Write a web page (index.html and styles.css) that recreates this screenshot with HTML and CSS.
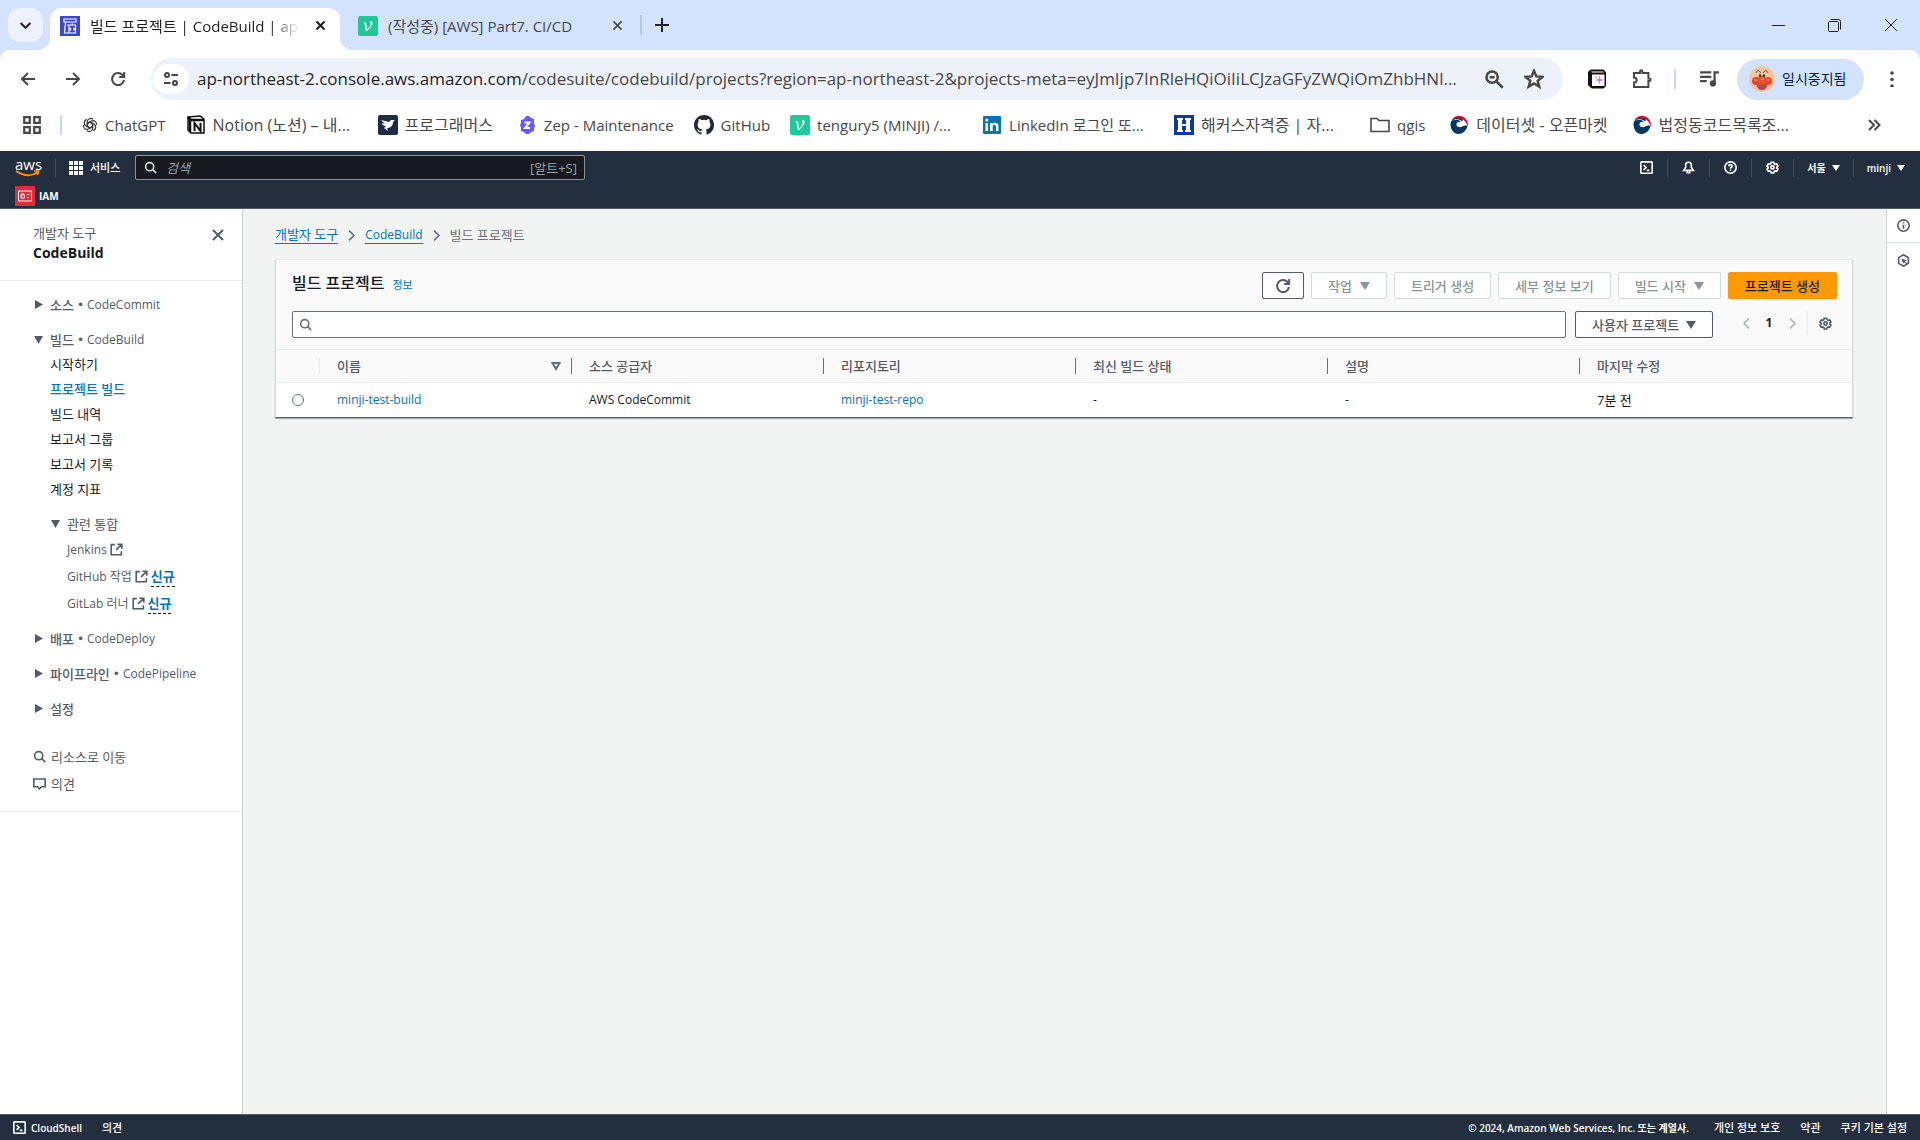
FILE: index.html
```html
<!DOCTYPE html>
<html lang="ko">
<head>
    <meta charset="UTF-8">
    <meta name="viewport" content="width=device-width, initial-scale=1.0">
    <title>빌드 프로젝트 | CodeBuild | ap-northeast-2</title>
    <link rel="stylesheet" href="styles.css">
</head>
<body>
    <!-- Shared icons -->
    <svg class="sprite" aria-hidden="true">
        <symbol id="i-close" viewBox="0 0 16 16"><path d="M3 3l10 10M13 3L3 13"/></symbol>
        <symbol id="i-search" viewBox="0 0 16 16"><circle cx="7" cy="7" r="5"/><path d="M10.700 10.700L15 15"/></symbol>
        <symbol id="i-gear" viewBox="0 0 16 16"><path d="M6.500 1.500h3l.6 1.900 1.200.7 1.900-.5 1.500 2.600-1.300 1.400v1.100l1.300 1.400-1.500 2.600-1.900-.5-1.200.7-.6 1.900h-3l-.6-1.900-1.200-.7-1.900.5-1.500-2.600 1.300-1.400V7.600L1.300 6.200l1.500-2.600 1.900.5 1.200-.7z"/><circle cx="8" cy="8" r="2"/></symbol>
        <symbol id="i-shell" viewBox="0 0 16 16"><rect x="1" y="1" width="14" height="14" rx="1"/><path d="M4.500 5l3 3-3 3M8.500 11.500h3"/></symbol>
        <symbol id="i-external" viewBox="0 0 16 16"><path d="M6 2H1.500v12.500H14V10M9 1.500h5.500V7M14 2L7.500 8.500"/></symbol>
        <symbol id="i-chevron" viewBox="0 0 16 16"><path d="M5 2l6 6-6 6"/></symbol>
        <symbol id="i-velog" viewBox="0 0 20 20"><rect width="20" height="20" rx="2" fill="#20c997" stroke="none"/><path d="M5.500 6.500L8 6l1.300 7.500c2-2 3.400-4 3.400-5.500 0-.8-.7-1-.7-1.600 0-.7.6-1.100 1.300-1.100.8 0 1.300.6 1.300 1.500 0 2.500-2.800 5.800-5.600 8.200H7.800L6.400 7.200l-1 .1z" fill="#fff" stroke="none"/></symbol>
        <symbol id="i-gov" viewBox="0 0 20 20"><path d="M1.500 9A8.700 8.700 0 0 1 10 1.500c3 0 4 2 3.500 5-1 .5-1.500 0-3.500 0-3 0-4 3-2.500 4.500 1.500 2 4 1.500 6 .5 3-1.500 4.500-1 5 0A9 9 0 0 1 1.500 9z" fill="#003764" stroke="none"/><path d="M2 6A8.800 8.800 0 0 1 18.500 12C18 7 14 3.500 9.500 3 6 2.700 3.500 4 2 6z" fill="#e4032e" stroke="none"/><path d="M3.500 5.500C7 3 13 4 15 9l-2 2c-1-3-5-5-9.500-5.500z" fill="#fff" stroke="none"/><path d="M2 7c3-3 8-3 10 0-3-1-5 1-4.500 3 .5 2.500 3.500 3 6 1.500 3-1.500 4-.5 4.500.5-1 4-4.500 7-8.500 7C4 19 .5 13 2 7z" fill="#003764" stroke="none"/></symbol>
    </svg>

    <!-- Browser tabs -->
    <div class="tab-strip">
        <button class="tab-search" aria-label="탭 검색"><svg class="icon small bold"><use href="#i-chevron"/></svg></button>
        <div class="tab active">
            <svg class="favicon" viewBox="0 0 20 20"><rect width="20" height="20" fill="#3b48cc"/><path d="M4 3h12v3H4zM5.500 6.500L4.500 17h5M7 9h8.500v8H9V9M12.200 9V7.500M11 12l-1 1.200 1 1.200M13.500 12l1 1.200-1 1.200" fill="none" stroke="#fff" stroke-width="1.200"/></svg>
            <span class="tab-title">빌드 프로젝트 | CodeBuild | ap</span>
            <button class="icon-button" aria-label="닫기"><svg class="icon small bold"><use href="#i-close"/></svg></button>
        </div>
        <div class="tab">
            <svg class="favicon"><use href="#i-velog"/></svg>
            <span class="tab-title">(작성중) [AWS] Part7. CI/CD</span>
            <button class="icon-button" aria-label="닫기"><svg class="icon small"><use href="#i-close"/></svg></button>
        </div>
        <span class="strip-divider"></span>
        <button class="icon-button new-tab" aria-label="새 탭"><svg class="icon" viewBox="0 0 16 16"><path d="M8 1v14M1 8h14"/></svg></button>
        <div class="window-controls">
            <button class="icon-button" aria-label="최소화"><svg class="icon thin" viewBox="0 0 16 16"><path d="M1 8.500h13"/></svg></button>
            <button class="icon-button" aria-label="이전 크기로"><svg class="icon thin" viewBox="0 0 16 16"><rect x="1.500" y="4.500" width="10" height="10" rx="1"/><path d="M3.500 2.500h8q2 0 2 2v8"/></svg></button>
            <button class="icon-button" aria-label="창 닫기"><svg class="icon thin" viewBox="0 0 16 16"><path d="M2 2l12 12M14 2L2 14"/></svg></button>
        </div>
    </div>

    <!-- Address bar -->
    <div class="toolbar">
        <button class="icon-button" aria-label="뒤로"><svg class="icon" viewBox="0 0 16 16"><path d="M15 8H2M8 2L2 8l6 6"/></svg></button>
        <button class="icon-button" aria-label="앞으로"><svg class="icon" viewBox="0 0 16 16"><path d="M1 8h13M8 2l6 6-6 6"/></svg></button>
        <button class="icon-button" aria-label="새로고침"><svg class="icon" viewBox="0 0 16 16"><path d="M14 9A6 6 0 1 1 12.500 4L14 5.500M14.200 1v5h-5"/></svg></button>
        <div class="omnibox">
            <button class="site-info" aria-label="사이트 정보 보기"><svg class="icon" viewBox="0 0 16 16"><circle cx="4" cy="4" r="2"/><path d="M8.500 4H15M1 12h6.500"/><circle cx="12" cy="12" r="2"/></svg></button>
            <span class="url"><b>ap-northeast-2.console.aws.amazon.com</b>/codesuite/codebuild/projects?region=ap-northeast-2&amp;projects-meta=eyJmIjp7InRleHQiOiIiLCJzaGFyZWQiOmZhbHNl...</span>
            <button class="icon-button" aria-label="확대/축소"><svg class="icon wide" viewBox="0 0 16 16"><circle cx="6.500" cy="6.500" r="4.500"/><path d="M10 10l5 5M4.500 6.500h4"/></svg></button>
            <button class="icon-button" aria-label="북마크"><svg class="icon wide" viewBox="0 0 16 16"><path d="M8 1.500l1.900 4.400 4.800.4-3.700 3.100 1.200 4.700L8 11.600l-4.200 2.500L5 9.400 1.300 6.300l4.800-.4z"/></svg></button>
        </div>
        <div class="extensions">
            <button class="icon-button" aria-label="Notion"><svg class="icon wide" viewBox="0 0 20 20"><path d="M1.500 3l2-2h13l2 2.500V17l-2 2h-12l-3-3z" fill="#111" stroke="#111" stroke-width="1"/><path d="M5 5.500h12.500V17H5zM4 2.500h12l1 1H5z" fill="#fff" stroke="none"/><path d="M12.500 6.500l1 3.500 3.500 1-3.500 1-1 3.500-1-3.500-3.500-1 3.500-1z" fill="#b583f5" stroke="none"/><circle cx="9" cy="8" r="1" fill="#f9b48a" stroke="none"/></svg></button>
            <button class="icon-button" aria-label="확장 프로그램"><svg class="icon wide" viewBox="0 0 20 20"><path d="M2 4h6V2.500a1.200 1.200 0 0 1 2.400 0V4h6v5.500h1a1.200 1.200 0 0 1 0 2.400h-1V18H2v-4.500c3.500 0 3.500-5 0-5z"/></svg></button>
        </div>
        <span class="strip-divider"></span>
        <button class="icon-button media" aria-label="미디어 제어"><svg class="icon wide" viewBox="0 0 18 18"><path d="M1 3h10M1 7h10M1 11h6M14 13V3h4"/><circle cx="12.500" cy="13" r="1.800" fill="currentColor"/></svg></button>
        <button class="profile">
            <svg class="avatar" viewBox="0 0 26 26"><circle cx="13" cy="13" r="13" fill="#f7c4a1"/><path d="M7 7q2-5 5 0M19 7q-2-5-5 0" fill="none" stroke="#71584b"/><ellipse cx="13" cy="20" rx="5" ry="4" fill="#b5474f"/><circle cx="7" cy="15" r="4" fill="#e0452c"/><circle cx="19" cy="15" r="4" fill="#e0452c"/><circle cx="13" cy="14" r="4.500" fill="#f0512f"/><ellipse cx="11" cy="9.500" rx="1" ry="1.500" fill="#222"/><ellipse cx="15" cy="9.500" rx="1" ry="1.500" fill="#222"/><path d="M5 14h3M18 14h3M12 13h2" stroke="#ffb59e"/></svg>
            일시중지됨
        </button>
        <button class="icon-button more" aria-label="더보기"><svg class="icon" viewBox="0 0 16 16"><g fill="currentColor" stroke="none"><circle cx="8" cy="2" r="1.800"/><circle cx="8" cy="8.500" r="1.800"/><circle cx="8" cy="15" r="1.800"/></g></svg></button>
    </div>

    <!-- Bookmarks -->
    <nav class="bookmarks">
        <button class="icon-button" aria-label="앱"><svg class="icon wide" viewBox="0 0 18 18"><path d="M2 2h5v5H2zM11 2h5v5h-5zM2 11h5v5H2zM11 11h5v5h-5z"/></svg></button>
        <span class="strip-divider"></span>
        <a href="#"><svg class="favicon small" viewBox="0 0 20 20"><g fill="none" stroke="#333" stroke-width="1.500"><path id="petal" d="M10 6.500l3.500 2V14a4.500 4.500 0 0 1-7.500 3"/><use href="#petal" transform="rotate(60 10 10)"/><use href="#petal" transform="rotate(120 10 10)"/><use href="#petal" transform="rotate(180 10 10)"/><use href="#petal" transform="rotate(240 10 10)"/><use href="#petal" transform="rotate(300 10 10)"/></g></svg><span>ChatGPT</span></a>
        <a href="#"><svg class="favicon" viewBox="0 0 20 20"><path d="M2 2l12-1 4 3v14H5l-3-3z" fill="#fff" stroke="#111" stroke-width="1.500"/><path d="M2 2l3 3h13M4 4v13" fill="none" stroke="#111" stroke-width="2.500"/><path d="M8.500 16V8l6 8V8" fill="none" stroke="#111" stroke-width="2"/></svg><span class="ko long">Notion (노션) – 내...</span></a>
        <a href="#" class="spaced"><svg class="favicon" viewBox="0 0 20 20"><rect width="20" height="20" rx="2" fill="#1f2a44"/><path d="M3 5l8 2 2-2h4l-2 2c0 4-3 6-6 6l1 3-4-3 2-2C5 11 4 9 4 8l3 1z" fill="#fff"/></svg><span class="ko">프로그래머스</span></a>
        <a href="#"><svg class="favicon" viewBox="0 0 20 20"><path d="M9 1h3l2 2 3 1v4l1 3-1 2v3l-3 1-2 2H9l-2-2-3-1v-3l-1-3 1-2V5l3-1z" fill="#6758ff"/><path d="M7.500 7.500h5l-4.500 5.500h5" fill="none" stroke="#fff" stroke-width="2"/></svg><span>Zep - Maintenance</span></a>
        <a href="#"><svg class="favicon" viewBox="0 0 16 16"><path fill="#24292f" d="M8 0C3.580 0 0 3.580 0 8c0 3.540 2.290 6.530 5.470 7.590.4.070.55-.17.55-.38 0-.19-.01-.82-.01-1.490-2.010.37-2.530-.49-2.690-.94-.09-.23-.48-.94-.82-1.130-.28-.15-.68-.52-.01-.53.63-.01 1.080.58 1.230.82.72 1.210 1.870.87 2.330.66.07-.52.28-.87.51-1.070-1.780-.2-3.640-.89-3.640-3.950 0-.87.31-1.590.82-2.150-.08-.2-.36-1.020.08-2.120 0 0 .67-.21 2.200.82a7.600 7.600 0 0 1 4 0c1.530-1.040 2.200-.82 2.200-.82.44 1.100.16 1.920.08 2.120.51.56.82 1.270.82 2.150 0 3.070-1.870 3.750-3.650 3.950.29.25.54.73.54 1.480 0 1.070-.01 1.930-.01 2.200 0 .21.15.46.55.38A8 8 0 0 0 8 0z"/></svg><span>GitHub</span></a>
        <a href="#"><svg class="favicon"><use href="#i-velog"/></svg><span class="long">tengury5 (MINJI) /...</span></a>
        <a href="#"><svg class="favicon" viewBox="0 0 20 20"><rect x="1" y="1" width="18" height="18" rx="1" fill="#0077b5"/><path d="M3.500 8H6v8H3.500zM8 8h2.500v1.200c1.500-2.200 6-1.800 6 2V16H14v-4.500c0-2-3.300-2-3.300 0V16H8z" fill="#fff"/><circle cx="4.800" cy="5" r="1.500" fill="#fff"/></svg><span class="long">LinkedIn 로그인 또...</span></a>
        <a href="#" class="spaced"><svg class="favicon" viewBox="0 0 20 20"><rect width="20" height="20" fill="#0b3ba1"/><path d="M3 3h6v2H8v4h4V5h-1V3h6v2h-1v10h1v2h-6v-2h1v-4H8v4h1v2H3v-2h1V5H3z" fill="#fff"/></svg><span class="ko long">해커스자격증 | 자...</span></a>
        <a href="#" class="spaced"><svg class="favicon" viewBox="0 0 20 20"><path d="M1 3.500h6l2 2h10v11H1z" fill="none" stroke="#474747" stroke-width="1.600"/></svg><span>qgis</span></a>
        <a href="#" class="spaced"><svg class="favicon"><use href="#i-gov"/></svg><span class="ko">데이터셋 - 오픈마켓</span></a>
        <a href="#"><svg class="favicon"><use href="#i-gov"/></svg><span class="ko">법정동코드목록조...</span></a>
        <button class="icon-button overflow" aria-label="북마크 더보기"><svg class="icon" viewBox="0 0 16 16"><path d="M3 3l5 5-5 5M8.500 3l5 5-5 5"/></svg></button>
    </nav>

    <!-- AWS navigation -->
    <header class="aws-nav">
        <div class="nav-row">
            <a class="logo" href="#" aria-label="aws"><span>aws</span><svg viewBox="0 0 26 8"><path d="M1 1q12 8 22 1M19 1l4.500 0-1 4" fill="none" stroke="#f90" stroke-width="1.700"/></svg></a>
            <button class="services"><svg class="icon" viewBox="0 0 16 16"><path fill="currentColor" stroke="none" d="M1 1h4v4H1zM6 1h4v4H6zM11 1h4v4h-4zM1 6h4v4H1zM6 6h4v4H6zM11 6h4v4h-4zM1 11h4v4H1zM6 11h4v4H6zM11 11h4v4h-4z"/></svg>서비스</button>
            <label class="nav-search">
                <svg class="icon small"><use href="#i-search"/></svg>
                <input type="text" placeholder="검색" aria-label="검색">
                <span>[알트+S]</span>
            </label>
            <div class="nav-tools">
                <button aria-label="CloudShell"><svg class="icon small"><use href="#i-shell"/></svg></button>
                <button aria-label="알림"><svg class="icon small" viewBox="0 0 16 16"><path d="M2 11.500h12L11.500 8V5a3.500 3.500 0 0 0-7 0v3zM6.500 12v2.500h3V12"/></svg></button>
                <button aria-label="지원"><svg class="icon small" viewBox="0 0 16 16"><circle cx="8" cy="8" r="7"/><path d="M6 6.500c0-3 4-2.500 4-.3C10 7.700 8 7.700 8 9.500M8 10.500V12"/></svg></button>
                <button aria-label="설정"><svg class="icon small"><use href="#i-gear"/></svg></button>
                <button class="region">서울 <i class="caret"></i></button>
                <button class="account">minji <i class="caret"></i></button>
            </div>
        </div>
        <a class="favorite" href="#"><svg class="favicon" viewBox="0 0 20 20"><rect width="20" height="20" fill="#dd2c3a"/><path d="M3.500 5h13v10h-13zM6 9h3.500v3H6zM6.700 9V7.500h2V9M12 8.500h2.500M12 11.500h2" fill="none" stroke="#fff"/></svg>IAM</a>
    </header>

    <div class="layout">
        <aside class="sidebar">
            <div class="sidebar-header">
                <div>
                    <p>개발자 도구</p>
                    <h2>CodeBuild</h2>
                </div>
                <button class="icon-button" aria-label="탐색 닫기"><svg class="icon"><use href="#i-close"/></svg></button>
            </div>
            <nav class="sidebar-nav">
                <button class="section"><i class="arrow"></i><b>소스</b><span class="dot">•</span>CodeCommit</button>
                <button class="section"><i class="arrow open"></i><b>빌드</b><span class="dot">•</span>CodeBuild</button>
                <ul class="pages">
                    <li><a href="#">시작하기</a></li>
                    <li><a href="#" class="current">프로젝트 빌드</a></li>
                    <li><a href="#">빌드 내역</a></li>
                    <li><a href="#">보고서 그룹</a></li>
                    <li><a href="#">보고서 기록</a></li>
                    <li><a href="#">계정 지표</a></li>
                </ul>
                <div class="related">
                    <button class="section ko"><i class="arrow open"></i>관련 통합</button>
                    <ul>
                        <li><a href="#">Jenkins <svg class="icon small"><use href="#i-external"/></svg></a></li>
                        <li><a href="#">GitHub 작업 <svg class="icon small"><use href="#i-external"/></svg></a><button class="new">신규</button></li>
                        <li><a href="#">GitLab 러너 <svg class="icon small"><use href="#i-external"/></svg></a><button class="new">신규</button></li>
                    </ul>
                </div>
                <button class="section"><i class="arrow"></i><b>배포</b><span class="dot">•</span>CodeDeploy</button>
                <button class="section"><i class="arrow"></i><b>파이프라인</b><span class="dot">•</span>CodePipeline</button>
                <button class="section"><i class="arrow"></i><b>설정</b></button>
                <div class="shortcuts">
                    <a href="#"><svg class="icon small"><use href="#i-search"/></svg>리소스로 이동</a>
                    <a href="#"><svg class="icon small" viewBox="0 0 16 16"><path d="M1 2.500h14v9.500h-4.500L8 14.500 5.500 12H1z"/></svg>의견</a>
                </div>
            </nav>
        </aside>

        <main>
            <nav class="breadcrumb">
                <a href="#" class="ko">개발자 도구</a>
                <svg class="icon small"><use href="#i-chevron"/></svg>
                <a href="#">CodeBuild</a>
                <svg class="icon small"><use href="#i-chevron"/></svg>
                <span class="ko">빌드 프로젝트</span>
            </nav>
            <section class="card">
                <div class="card-header">
                    <h1>빌드 프로젝트</h1>
                    <a class="info" href="#">정보</a>
                    <div class="actions">
                        <button class="btn refresh" aria-label="새로 고침"><svg class="icon" viewBox="0 0 16 16"><path d="M14 9A6 6 0 1 1 12.500 4L14 5.500M14.200 1v5h-5"/></svg></button>
                        <button class="btn" disabled>작업 <i class="caret"></i></button>
                        <button class="btn" disabled>트리거 생성</button>
                        <button class="btn" disabled>세부 정보 보기</button>
                        <button class="btn" disabled>빌드 시작 <i class="caret"></i></button>
                        <button class="btn primary">프로젝트 생성</button>
                    </div>
                </div>
                <div class="filters">
                    <label class="search"><svg class="icon small"><use href="#i-search"/></svg><input type="text" aria-label="프로젝트 검색"></label>
                    <div class="select-wrap">
                        <select aria-label="프로젝트 범위"><option>사용자 프로젝트</option></select>
                        <i class="caret"></i>
                    </div>
                    <div class="pagination">
                        <button class="icon-button flip" aria-label="이전 페이지"><svg class="icon small"><use href="#i-chevron"/></svg></button>
                        <b>1</b>
                        <button class="icon-button" aria-label="다음 페이지"><svg class="icon small"><use href="#i-chevron"/></svg></button>
                    </div>
                    <button class="icon-button preferences" aria-label="기본 설정"><svg class="icon small"><use href="#i-gear"/></svg></button>
                </div>
                <table>
                    <thead>
                        <tr>
                            <th class="select-cell"></th>
                            <th><div>이름<svg class="sort" viewBox="0 0 10 10"><path d="M1.500 2h7L5 8z"/></svg></div></th>
                            <th><div>소스 공급자</div></th>
                            <th><div>리포지토리</div></th>
                            <th><div>최신 빌드 상태</div></th>
                            <th><div>설명</div></th>
                            <th class="last"><div>마지막 수정</div></th>
                        </tr>
                    </thead>
                    <tbody>
                        <tr>
                            <td class="select-cell"><input type="radio" name="project" aria-label="minji-test-build"></td>
                            <td><a href="#">minji-test-build</a></td>
                            <td>AWS CodeCommit</td>
                            <td><a href="#">minji-test-repo</a></td>
                            <td>-</td>
                            <td>-</td>
                            <td class="ko">7분 전</td>
                        </tr>
                    </tbody>
                </table>
            </section>
        </main>

        <aside class="tools">
            <button aria-label="정보"><svg class="icon small" viewBox="0 0 16 16"><circle cx="8" cy="8" r="7"/><path d="M8 7v5M8 4v1.500"/></svg></button>
            <button aria-label="자습서"><svg class="icon small" viewBox="0 0 16 16"><path d="M8 1l6 3.500v7L8 15l-6-3.500v-7z"/><path d="M5.500 5.500l7 2.500-2.700 1 3 3-1 1-3-3L7.500 12z" fill="currentColor" stroke="none"/></svg></button>
        </aside>
    </div>

    <footer>
        <button><svg class="icon small"><use href="#i-shell"/></svg>CloudShell</button>
        <button class="ko">의견</button>
        <span class="copyright">© 2024, Amazon Web Services, Inc. 또는 계열사.</span>
        <a href="#">개인 정보 보호</a>
        <a href="#">약관</a>
        <a href="#">쿠키 기본 설정</a>
    </footer>
</body>
</html>
```
FILE: styles.css
```css
* {
    box-sizing: border-box;
}
body {
    margin: 0;
    min-height: 100vh;
    display: flex;
    flex-direction: column;
    background: #fff;
    color: #16191f;
    font-family: "Open Sans", "Noto Sans CJK KR", sans-serif;
    font-size: 12px;
    line-height: 20px;
}
button, input, select {
    font: inherit;
    color: inherit;
}
button {
    padding: 0;
    border: 0;
    background: none;
    cursor: pointer;
}
a {
    color: #0073bb;
    text-decoration: none;
}
h1, h2, p, ul {
    margin: 0;
    padding: 0;
    list-style: none;
}
.ko {
    font-size: 13px;
}
.sprite {
    display: none;
}
.icon {
    width: 16px;
    height: 16px;
    flex: none;
    fill: none;
    stroke: currentColor;
    stroke-width: 2;
}
.icon.small {
    width: 13px;
    height: 13px;
}
.icon.wide {
    width: 20px;
    height: 20px;
}
.icon.bold {
    stroke-width: 2.5;
}
.icon.thin {
    stroke-width: 1;
}
.favicon {
    width: 20px;
    height: 20px;
    flex: none;
}
.favicon.small {
    width: 16px;
    height: 16px;
}
.icon-button {
    display: flex;
    align-items: center;
    justify-content: center;
    width: 24px;
    height: 24px;
    flex: none;
}
.caret {
    display: inline-block;
    border: 5px solid transparent;
    border-top: 8px solid currentColor;
    border-bottom: 0;
}

/* Browser chrome */
.tab-strip {
    display: flex;
    align-items: center;
    height: 60px;
    margin-bottom: -10px;
    padding: 0 0 10px 8px;
    background: #d3e2fd;
    font-size: 15px;
    color: #1f1f1f;
}
.tab-search {
    display: flex;
    align-items: center;
    justify-content: center;
    width: 35px;
    height: 34px;
    margin-right: 7px;
    border-radius: 12px;
    background: #ecf2fe;
}
.tab-search svg {
    transform: rotate(90deg);
}
.tab {
    display: flex;
    align-items: center;
    width: 290px;
    height: 42px;
    margin-top: 8px;
    padding: 0 8px 7px 10px;
    color: #474747;
}
.tab + .tab {
    width: 300px;
    padding-left: 18px;
    padding-right: 11px;
}
.tab.active {
    position: relative;
    background: #fff;
    border-radius: 12px 12px 0 0;
    color: #1f1f1f;
}
/* flared feet of the open tab */
.tab.active::before, .tab.active::after {
    content: "";
    position: absolute;
    bottom: 0;
    width: 12px;
    height: 12px;
}
.tab.active::before {
    left: -12px;
    background: radial-gradient(circle at 0 0, transparent 12px, #fff 12px);
}
.tab.active::after {
    right: -12px;
    background: radial-gradient(circle at 100% 0, transparent 12px, #fff 12px);
}
.tab-title {
    flex: 1;
    margin: 0 0 0 10px;
    overflow: hidden;
    white-space: nowrap;
}
.active .tab-title {
    margin-right: 8px;
    mask-image: linear-gradient(90deg, #000 86%, transparent);
}
.strip-divider {
    width: 2px;
    height: 20px;
    background: #c2d8fc;
}
.tab-strip .strip-divider {
    background: #a8c7fa;
}
.new-tab {
    margin-left: 8px;
}
.window-controls {
    display: flex;
    gap: 32px;
    margin-left: auto;
    padding-right: 17px;
}
.toolbar {
    position: relative;
    display: flex;
    align-items: center;
    height: 58px;
    padding: 0 16px;
    border-radius: 10px 10px 0 0;
    background: #fff;
    color: #474747;
}
.toolbar > .icon-button {
    margin-right: 21px;
}
.omnibox {
    display: flex;
    align-items: center;
    flex: 1;
    min-width: 0;
    height: 42px;
    padding: 0 17px 0 2px;
    gap: 16px;
    border-radius: 21px;
    background: #ecf1fa;
}
.site-info {
    display: flex;
    align-items: center;
    justify-content: center;
    width: 36px;
    height: 30px;
    margin-right: -8px;
    flex: none;
    border-radius: 15px;
    background: #fff;
}
.url {
    flex: 1;
    overflow: hidden;
    white-space: nowrap;
    font-size: 17px;
    line-height: 24px;
}
.url b {
    font-weight: normal;
    color: #1f1f1f;
}
.extensions {
    display: flex;
    gap: 21px;
    margin: 0 20px 0 22px;
}
.toolbar > .media {
    margin: 0 16px 0 21px;
}
.profile {
    display: flex;
    align-items: center;
    gap: 7px;
    width: 127px;
    height: 41px;
    padding-left: 12px;
    border-radius: 21px;
    background: #d3e3fd;
    color: #041e49;
    font-size: 14px;
    white-space: nowrap;
}
.avatar {
    width: 26px;
    height: 26px;
    flex: none;
}
.toolbar > .more {
    margin: 0 0 0 16px;
}
.bookmarks {
    display: flex;
    align-items: center;
    height: 43px;
    padding: 0 34px 9px 20px;
    font-size: 15px;
}
.bookmarks .icon-button {
    color: #474747;
}
.bookmarks .strip-divider {
    margin: 0 20px 0 16px;
}
.bookmarks a {
    display: flex;
    align-items: center;
    gap: 7px;
    margin-right: 20px;
    color: #474747;
    white-space: nowrap;
}
.bookmarks .spaced {
    margin-right: 24px;
}
.bookmarks .ko {
    font-size: 16px;
}
.bookmarks .long {
    width: 145px;
}
.bookmarks .overflow {
    margin-left: auto;
}

/* AWS navigation */
.aws-nav {
    height: 58px;
    padding: 3px 15px 0;
    border-bottom: 1px solid #545b64;
    background: #232f3e;
    color: #fff;
    font-size: 11px;
}
.nav-row {
    display: flex;
    align-items: center;
    height: 27px;
}
.logo {
    display: flex;
    flex-direction: column;
    width: 41px;
    border-right: 1px solid #414d5c;
    color: #fff;
    font-size: 15px;
    line-height: 12px;
}
.logo svg {
    width: 26px;
    height: 8px;
}
.services {
    display: flex;
    align-items: center;
    gap: 6px;
    width: 79px;
    padding-left: 12px;
    font-weight: 500;
    white-space: nowrap;
}
.nav-search {
    display: flex;
    align-items: center;
    gap: 9px;
    width: 450px;
    height: 25px;
    padding: 0 7px 0 8px;
    border: 1px solid #879596;
    border-radius: 2px;
    background: #16191f;
    color: #95a5a6;
    font-size: 13px;
}
.nav-search .icon {
    color: #d5dbdb;
}
.nav-search input {
    flex: 1;
    min-width: 0;
    padding: 0;
    border: 0;
    background: none;
}
.nav-search input::placeholder {
    color: #95a5a6;
    font-style: italic;
}
.nav-tools {
    display: flex;
    margin-left: auto;
}
.nav-tools button {
    display: flex;
    align-items: center;
    justify-content: center;
    gap: 6px;
    width: 42px;
    height: 18px;
    border-right: 1px solid #414d5c;
    font-size: 10px;
    font-weight: 600;
}
.nav-tools .caret {
    border-width: 6px 4px 0;
}
.nav-tools .region {
    width: 60px;
}
.nav-tools .account {
    width: 51px;
    border: 0;
    justify-content: flex-end;
}
.favorite {
    display: flex;
    align-items: center;
    gap: 4px;
    padding-top: 5px;
    color: #fff;
    font-size: 10px;
    font-weight: bold;
}

/* Page layout */
.layout {
    display: flex;
    flex: 1;
    background: #f2f3f3;
}
.sidebar {
    width: 243px;
    flex: none;
    border-right: 1px solid #ccd1d1;
    background: #fff;
    color: #545b64;
}
.sidebar-header {
    display: flex;
    justify-content: space-between;
    height: 72px;
    padding: 14px 12px 0 33px;
    border-bottom: 1px solid #eaeded;
    font-size: 13px;
}
.sidebar-header h2 {
    color: #16191f;
    font-size: 14px;
}
.sidebar-nav {
    padding: 11px 0 14px 33px;
    border-bottom: 1px solid #eaeded;
}
.sidebar-nav b {
    font-size: 13px;
    font-weight: 500;
}
.section {
    display: flex;
    align-items: center;
    height: 25px;
    margin-bottom: 10px;
}
.dot {
    margin: 0 3px;
    font-family: "DejaVu Sans", sans-serif;
}
.arrow {
    width: 9px;
    height: 9px;
    margin: 0 7px 0 1px;
    background: #545b64;
    clip-path: polygon(1px 0, 100% 50%, 1px 100%);
}
.arrow.open {
    clip-path: polygon(0 1px, 100% 1px, 50% 100%);
}
.section + .pages {
    margin: -10px 0 9px 17px;
}
.pages a {
    display: block;
    color: #16191f;
    font-size: 13px;
    line-height: 25px;
}
.pages .current {
    color: #0073bb;
    font-weight: 500;
}
.related {
    padding-left: 17px;
    margin-bottom: 9px;
}
.related .section {
    margin: 0;
}
.related ul {
    padding-left: 17px;
}
.related li {
    display: flex;
    align-items: center;
    gap: 3px;
    height: 27px;
}
.related a {
    display: flex;
    align-items: center;
    gap: 3px;
    color: #545b64;
}
.new {
    border-bottom: 1px dashed #16191f;
    color: #0073bb;
    font-size: 13px;
    font-weight: bold;
}
.shortcuts {
    margin-top: 22px;
}
.shortcuts a {
    display: flex;
    align-items: center;
    gap: 5px;
    height: 27px;
    color: #545b64;
    font-size: 13px;
}
main {
    flex: 1;
    min-width: 0;
    padding: 16px 33px 0 32px;
}
.breadcrumb {
    display: flex;
    align-items: center;
    gap: 7px;
    height: 20px;
    margin-bottom: 14px;
    color: #687078;
}
.breadcrumb a {
    border-bottom: 1px solid #0073bb;
    line-height: 17px;
}
.card {
    border: 1px solid #d5dbdb;
    border-top-color: #eaeded;
    border-bottom-color: #545b64;
    background: #fafafa;
    box-shadow: 0 1px 1px rgba(0, 28, 36, .3);
}
.card-header {
    display: flex;
    height: 51px;
    padding: 12px 15px 0 16px;
}
.card-header h1 {
    font-size: 16px;
    font-weight: 500;
    line-height: 22px;
}
.info {
    margin-left: 8px;
    font-size: 11px;
    line-height: 26px;
}
.actions {
    display: flex;
    gap: 7px;
    margin-left: auto;
}
.btn {
    display: flex;
    align-items: center;
    justify-content: center;
    gap: 8px;
    height: 27px;
    padding: 0 16px;
    border: 1px solid #545b64;
    border-radius: 2px;
    background: #fff;
    color: #545b64;
    font-size: 13px;
    font-weight: 500;
    white-space: nowrap;
}
.btn:disabled {
    border-color: #d5dbdb;
    color: #879596;
}
.btn.refresh {
    width: 42px;
    padding: 0;
}
.btn.primary {
    border-color: #f90;
    background: #f90;
    color: #16191f;
}
.filters {
    display: flex;
    height: 38px;
    padding: 0 15px 0 16px;
}
.search {
    display: flex;
    align-items: center;
    flex: 1;
    height: 27px;
    padding-left: 6px;
    border: 1px solid #687078;
    border-radius: 2px;
    background: #fff;
    color: #687078;
}
.search input {
    flex: 1;
    border: 0;
    outline: 0;
    background: none;
}
.select-wrap {
    position: relative;
    margin-left: 9px;
    color: #545b64;
}
.select-wrap select {
    width: 138px;
    height: 27px;
    padding: 0 16px;
    appearance: none;
    border: 1px solid #545b64;
    border-radius: 2px;
    background: #fff;
    font-size: 13px;
    font-weight: 500;
}
.select-wrap .caret {
    position: absolute;
    right: 17px;
    top: 10px;
    pointer-events: none;
}
.pagination {
    display: flex;
    align-items: center;
    width: 95px;
    height: 24px;
    padding-left: 21px;
    border-right: 1px solid #eaeded;
}
.pagination .icon-button {
    color: #aab7b8;
}
.pagination b {
    width: 22px;
    text-align: center;
}
.flip svg {
    transform: scaleX(-1);
}
.preferences {
    margin-left: 5px;
    color: #545b64;
}
table {
    width: 100%;
    border-collapse: collapse;
    table-layout: fixed;
}
th {
    height: 33px;
    padding: 0;
    border-top: 1px solid #eaeded;
    border-bottom: 1px solid #eaeded;
    color: #545b64;
    font-size: 13px;
    font-weight: 500;
    text-align: left;
}
th div {
    display: flex;
    align-items: center;
    justify-content: space-between;
    height: 16px;
    padding: 0 10px 0 17px;
    border-left: 1px solid #687078;
}
th:nth-child(2) div {
    border-color: #eaeded;
}
th.last {
    width: 273px;
}
.sort {
    width: 10px;
    height: 10px;
    fill: none;
    stroke: #687078;
    stroke-width: 2;
}
td {
    height: 34px;
    padding: 0 18px;
    background: #fff;
}
.select-cell {
    width: 43px;
    padding: 0 0 0 16px;
}
.select-cell input {
    display: block;
    appearance: none;
    width: 12px;
    height: 12px;
    margin: 0;
    border: 1px solid #687078;
    border-radius: 50%;
}
.tools {
    width: 34px;
    flex: none;
    border-left: 1px solid #ccd1d1;
    background: #fff;
    color: #545b64;
}
.tools button {
    display: flex;
    align-items: center;
    justify-content: center;
    width: 100%;
    height: 34px;
}
.tools button:first-child {
    border-bottom: 1px solid #d5dbdb;
}
footer {
    display: flex;
    align-items: center;
    gap: 20px;
    height: 26px;
    padding: 0 13px;
    border-top: 1px solid #545b64;
    background: #232f3e;
    color: #fff;
    font-size: 10px;
    font-weight: 600;
    white-space: nowrap;
}
footer button {
    display: flex;
    align-items: center;
    gap: 5px;
}
footer a, footer .ko {
    color: #fff;
    font-size: 11px;
    font-weight: 500;
}
.copyright {
    margin-left: auto;
    margin-right: 5px;
}
```
